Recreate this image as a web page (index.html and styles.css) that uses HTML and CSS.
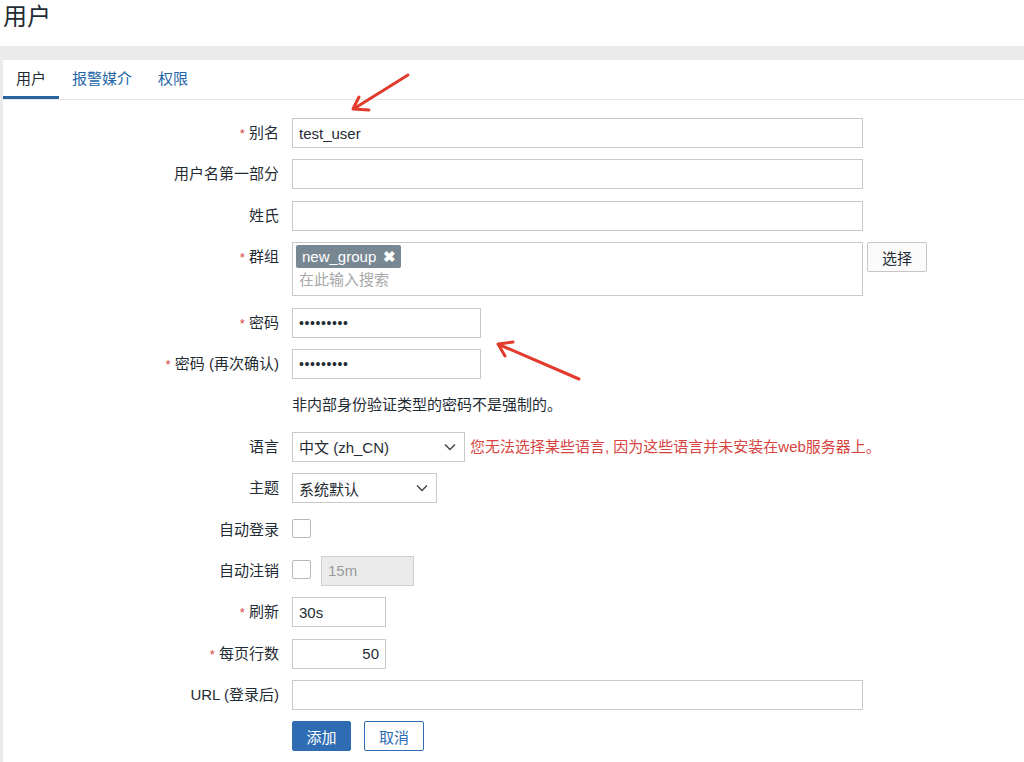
FILE: index.html
```html
<!DOCTYPE html>
<html lang="zh-CN">
<head>
<meta charset="utf-8">
<title>用户</title>
<link rel="stylesheet" href="styles.css">
</head>
<body>
<header class="page-title"><h1>用户</h1></header>
<main class="content">
  <section class="card">
    <nav class="tabs">
      <a class="tab active">用户</a>
      <a class="tab">报警媒介</a>
      <a class="tab">权限</a>
    </nav>
    <form class="form">
      <div class="row">
        <label class="lbl"><span class="req">*</span> 别名</label>
        <div class="ctl"><input class="field w-wide" type="text" value="test_user"></div>
      </div>
      <div class="row">
        <label class="lbl">用户名第一部分</label>
        <div class="ctl"><input class="field w-wide" type="text" value=""></div>
      </div>
      <div class="row">
        <label class="lbl">姓氏</label>
        <div class="ctl"><input class="field w-wide" type="text" value=""></div>
      </div>
      <div class="row">
        <label class="lbl"><span class="req">*</span> 群组</label>
        <div class="ctl">
          <div class="multi">
            <span class="tag">new_group <span class="tag-x">✖</span></span>
            <span class="placeholder">在此输入搜索</span>
          </div>
          <button type="button" class="btn-select">选择</button>
        </div>
      </div>
      <div class="row">
        <label class="lbl"><span class="req">*</span> 密码</label>
        <div class="ctl"><input class="field w-pass" type="password" value="123456789"></div>
      </div>
      <div class="row">
        <label class="lbl"><span class="req">*</span> 密码 (再次确认)</label>
        <div class="ctl"><input class="field w-pass" type="password" value="123456789"></div>
      </div>
      <div class="row">
        <span class="lbl"></span>
        <div class="ctl note">非内部身份验证类型的密码不是强制的。</div>
      </div>
      <div class="row">
        <label class="lbl">语言</label>
        <div class="ctl">
          <div class="select w-lang"><span>中文 (zh_CN)</span><svg class="chev" viewBox="0 0 12 8" width="12" height="8"><path d="M1 1.5 L6 6.5 L11 1.5" fill="none" stroke="#444" stroke-width="1.4"/></svg></div>
          <span class="error">您无法选择某些语言, 因为这些语言并未安装在web服务器上。</span>
        </div>
      </div>
      <div class="row">
        <label class="lbl">主题</label>
        <div class="ctl">
          <div class="select w-theme"><span>系统默认</span><svg class="chev" viewBox="0 0 12 8" width="12" height="8"><path d="M1 1.5 L6 6.5 L11 1.5" fill="none" stroke="#444" stroke-width="1.4"/></svg></div>
        </div>
      </div>
      <div class="row">
        <label class="lbl">自动登录</label>
        <div class="ctl"><span class="check"></span></div>
      </div>
      <div class="row">
        <label class="lbl">自动注销</label>
        <div class="ctl"><span class="check"></span><input class="field w-short disabled" type="text" value="15m" disabled></div>
      </div>
      <div class="row">
        <label class="lbl"><span class="req">*</span> 刷新</label>
        <div class="ctl"><input class="field w-num" type="text" value="30s"></div>
      </div>
      <div class="row">
        <label class="lbl"><span class="req">*</span> 每页行数</label>
        <div class="ctl"><input class="field w-num right" type="text" value="50"></div>
      </div>
      <div class="row">
        <label class="lbl">URL (登录后)</label>
        <div class="ctl"><input class="field w-wide" type="text" value=""></div>
      </div>
      <div class="row">
        <span class="lbl"></span>
        <div class="ctl">
          <button type="button" class="btn-primary">添加</button>
          <button type="button" class="btn-alt">取消</button>
        </div>
      </div>
    </form>
  </section>
</main>
<svg class="annotations" width="1024" height="762" viewBox="0 0 1024 762">
  <g fill="none" stroke="#e23b2e" stroke-width="3" stroke-linecap="round" stroke-linejoin="round">
    <path d="M408 75 L355 108"/>
    <path d="M359 97 L353 109 L369 110"/>
    <path d="M579 379 L500 345"/>
    <path d="M513 342 L498 344 L505 356"/>
  </g>
</svg>
</body>
</html>
```
FILE: styles.css
```css
* {
  box-sizing: border-box;
}

body {
  margin: 0;
  font-family: "Liberation Sans", "Noto Sans CJK SC", sans-serif;
  color: #1f2c33;
  background: #ffffff;
  position: relative;
  width: 1024px;
  height: 762px;
  overflow: hidden;
}

.page-title {
  height: 46px;
  padding-left: 3px;
}

.page-title h1 {
  margin: 0;
  font-size: 24px;
  font-weight: 400;
  line-height: 34px;
}

.content {
  background: #ebebeb;
  padding: 14px 0 0 3px;
}

.card {
  background: #ffffff;
  height: 702px;
}

.tabs {
  display: flex;
  height: 40px;
  border-bottom: 1px solid #e6e6e6;
}

.tab {
  padding: 2px 13px 0;
  font-size: 15px;
  line-height: 34px;
  color: #2466a8;
  border-bottom: 3px solid transparent;
}

.tab.active {
  color: #1f2c33;
  border-bottom-color: #2a63a0;
}

.form {
  display: flex;
  flex-direction: column;
  gap: 11.4px;
  padding-top: 18px;
}

.row {
  display: grid;
  grid-template-columns: 276px 1fr;
  column-gap: 13px;
  align-items: start;
}

.lbl {
  text-align: right;
  font-size: 15px;
  line-height: 29px;
  white-space: nowrap;
}

.req {
  color: #d64541;
  font-size: 13px;
}

.ctl {
  display: flex;
  align-items: flex-start;
  min-height: 30px;
}

.field {
  height: 30px;
  border: 1px solid #c9c9c9;
  padding: 0 6px;
  font-family: inherit;
  font-size: 15px;
  color: #1f2c33;
  background: #ffffff;
  outline: none;
}

.field[type="password"] {
  font-size: 14px;
  letter-spacing: 0.6px;
}

.w-wide { width: 571px; }
.w-pass { width: 189px; }
.w-num { width: 94px; }
.w-short { width: 93px; margin-left: 10px; }

.right { text-align: right; }

.disabled {
  background: #ebebeb;
  color: #9a9a9a;
  border-color: #cfcfcf;
}

.multi {
  width: 571px;
  height: 54px;
  border: 1px solid #c9c9c9;
  padding: 2px 3px;
  display: flex;
  flex-direction: column;
  align-items: flex-start;
}

.tag {
  display: inline-flex;
  align-items: center;
  gap: 7px;
  height: 23px;
  padding: 0 5px 0 6px;
  background: #778893;
  color: #ffffff;
  border-radius: 2px;
  font-size: 15px;
}

.tag-x {
  font-size: 15px;
  font-weight: 700;
}

.placeholder {
  color: #a8a8a8;
  font-size: 15px;
  line-height: 24px;
  padding-left: 3px;
}

.btn-select {
  margin-left: 4px;
  width: 60px;
  height: 30px;
  border: 1px solid #c6c6c6;
  border-radius: 2px;
  background: #fbfbfb;
  font-family: inherit;
  font-size: 15px;
  color: #1f2c33;
  padding: 0;
}

.note {
  font-size: 15px;
  line-height: 30px;
}

.select {
  height: 30px;
  border: 1px solid #c9c9c9;
  padding: 0 8px 0 6px;
  display: flex;
  align-items: center;
  justify-content: space-between;
  font-size: 15px;
  background: #ffffff;
}

.w-lang { width: 173px; }
.w-theme { width: 145px; }

.chev {
  flex: none;
}

.error {
  margin-left: 5px;
  color: #d64541;
  font-size: 15px;
  line-height: 30px;
  white-space: nowrap;
}

.check {
  width: 19px;
  height: 19px;
  margin-top: 4px;
  border: 1px solid #b8b8b8;
  border-radius: 2px;
  background: #ffffff;
}

.btn-primary {
  width: 59px;
  height: 30px;
  border: 1px solid #2e6db3;
  border-radius: 2px;
  background: #2e6db3;
  color: #ffffff;
  font-family: inherit;
  font-size: 15px;
  padding: 0;
}

.btn-alt {
  margin-left: 13px;
  width: 60px;
  height: 30px;
  border: 1px solid #2e6db3;
  border-radius: 2px;
  background: #ffffff;
  color: #2e6db3;
  font-family: inherit;
  font-size: 15px;
  padding: 0;
}

.annotations {
  position: absolute;
  top: 0;
  left: 0;
  pointer-events: none;
}
```
